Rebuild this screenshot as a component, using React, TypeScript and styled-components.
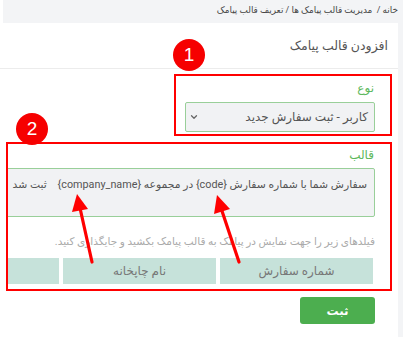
import React from 'react'
import styled, { createGlobalStyle } from 'styled-components'
import { ChevronDown } from 'lucide-react'

const GlobalStyle = createGlobalStyle`
    html, body {
        margin:0;
        padding:0;
        background:#ffffff;
    }
    body {
        font-family: Roboto, "DejaVu Sans", sans-serif;
        color:#555;
    }
`

const chips = ['شماره سفارش', 'نام چاپخانه', 'مبلغ']

const TypeField = () => {
    return (
        <Frame $width="218px" $padding="3px 15px 2px 9px">
            <Badge $left="-3px" $top="-37px">1</Badge>
            <Label>نوع</Label>
            <SelectBox>
                <span>کاربر - ثبت سفارش جدید</span>
                <ChevronDown size={10} strokeWidth={3} color="#666" />
            </SelectBox>
        </Frame>
    )
}

const TemplateField = () => {
    return (
        <Frame $width="386px" $padding="2px 15px 5px 0" $top="6px">
            <Badge $left="8px" $top="-31px">2</Badge>
            <Clip>
                <Label>قالب</Label>
                <TemplateBox>
                    سفارش شما با شماره سفارش {'{code}'} در مجموعه {'{company_name}'}&nbsp;&nbsp;&nbsp; ثبت شد
                </TemplateBox>
                <Hint>فیلدهای زیر را جهت نمایش در پیامک به قالب پیامک بکشید و جایگذاری کنید.</Hint>
                <ChipRow>
                    {chips.map((c) => (
                        <Chip key={c}>{c}</Chip>
                    ))}
                </ChipRow>
            </Clip>
        </Frame>
    )
}

const Arrows = () => {
    return (
        <Overlay width="403" height="337" viewBox="0 0 403 337">
            <line x1="239" y1="262" x2="221" y2="208" stroke="#ff0000" strokeWidth="3.2" strokeLinecap="round" />
            <polygon points="217,195 230,209 214,214" fill="#ff0000" />
            <line x1="92" y1="262" x2="80" y2="208" stroke="#ff0000" strokeWidth="3.2" strokeLinecap="round" />
            <polygon points="77,194 88,209 72,212" fill="#ff0000" />
        </Overlay>
    )
}

const App = () => {
    return (
        <Page>
            <GlobalStyle />
            <Breadcrumb dir="rtl">خانه /&nbsp; مدیریت قالب پیامک ها / تعریف قالب پیامک</Breadcrumb>
            <Main>
                <Card>
                    <CardTitle dir="rtl">افزودن قالب پیامک</CardTitle>
                    <CardBody dir="rtl">
                        <TypeField />
                        <TemplateField />
                        <SubmitButton>ثبت</SubmitButton>
                    </CardBody>
                </Card>
                <Gutter />
            </Main>
            <Arrows />
        </Page>
    )
}

export default App

const Page = styled.div`
    position:relative;
    width:403px;
    height:337px;
    overflow:hidden;
`

const Breadcrumb = styled.div`
    height:23px;
    margin-left:3px;
    padding-right:5px;
    background:#f3f4f6;
    font-size:8.9px;
    line-height:21px;
    color:#444;
    white-space:nowrap;
`

const Main = styled.div`
    display:flex;
    height:314px;
`

const Card = styled.div`
    flex:1;
    background:#ffffff;
`

const Gutter = styled.div`
    width:7px;
    background:#f3f4f6;
`

const CardTitle = styled.div`
    height:45px;
    padding-right:10px;
    border-bottom:1px solid #ececec;
    font-size:12.5px;
    line-height:46px;
    color:#555;
`

const CardBody = styled.div`
    display:flex;
    flex-direction:column;
    align-items:flex-start;
    padding:5px 6px 0 6px;
`

const Frame = styled.div<{ $width: string; $padding: string; $top?: string }>`
    position:relative;
    box-sizing:border-box;
    width:${(p) => p.$width};
    margin-top:${(p) => p.$top || '0'};
    padding:${(p) => p.$padding};
    border:2px solid #ff0000;
`

const Clip = styled.div`
    overflow:hidden;
`

const Badge = styled.div<{ $left: string; $top: string }>`
    position:absolute;
    left:${(p) => p.$left};
    top:${(p) => p.$top};
    width:32px;
    height:32px;
    border-radius:50%;
    background:#f60000;
    color:#fff;
    font-family:"Liberation Sans", Arial, sans-serif;
    font-size:19px;
    line-height:32px;
    text-align:center;
`

const Label = styled.div`
    height:18px;
    margin-bottom:5px;
    padding-right:1px;
    font-size:12px;
    line-height:18px;
    color:#5cb85c;
`

const SelectBox = styled.div`
    box-sizing:border-box;
    display:flex;
    align-items:center;
    justify-content:space-between;
    height:30px;
    padding:0 6px 0 3px;
    border:1px solid #99cf99;
    border-radius:2px;
    background:#f1f2f4;
    font-size:12px;
    color:#555;
`

const TemplateBox = styled.div`
    box-sizing:border-box;
    width:520px;
    height:49px;
    margin-top:-1px;
    padding:8px 7px 0 0;
    border:1px solid #99cf99;
    border-radius:2px;
    background:#f1f2f4;
    font-size:10.8px;
    line-height:16px;
    color:#555;
    white-space:nowrap;
`

const Hint = styled.div`
    margin-top:17px;
    font-size:10.5px;
    line-height:16px;
    color:#aaa;
    white-space:nowrap;
`

const ChipRow = styled.div`
    display:flex;
    gap:4px;
    margin-top:8px;
    margin-right:2px;
`

const Chip = styled.div`
    flex:0 0 153px;
    height:26px;
    background:#c6e2da;
    font-size:12px;
    line-height:26px;
    text-align:center;
    color:#777;
`

const SubmitButton = styled.button`
    width:75px;
    height:27px;
    margin-top:6px;
    margin-right:17px;
    border:none;
    border-radius:3px;
    background:#4cae4f;
    color:#fff;
    font-family:Roboto, "DejaVu Sans", sans-serif;
    font-size:12px;
    font-weight:bold;
`

const Overlay = styled.svg`
    position:absolute;
    left:0;
    top:0;
    pointer-events:none;
`
